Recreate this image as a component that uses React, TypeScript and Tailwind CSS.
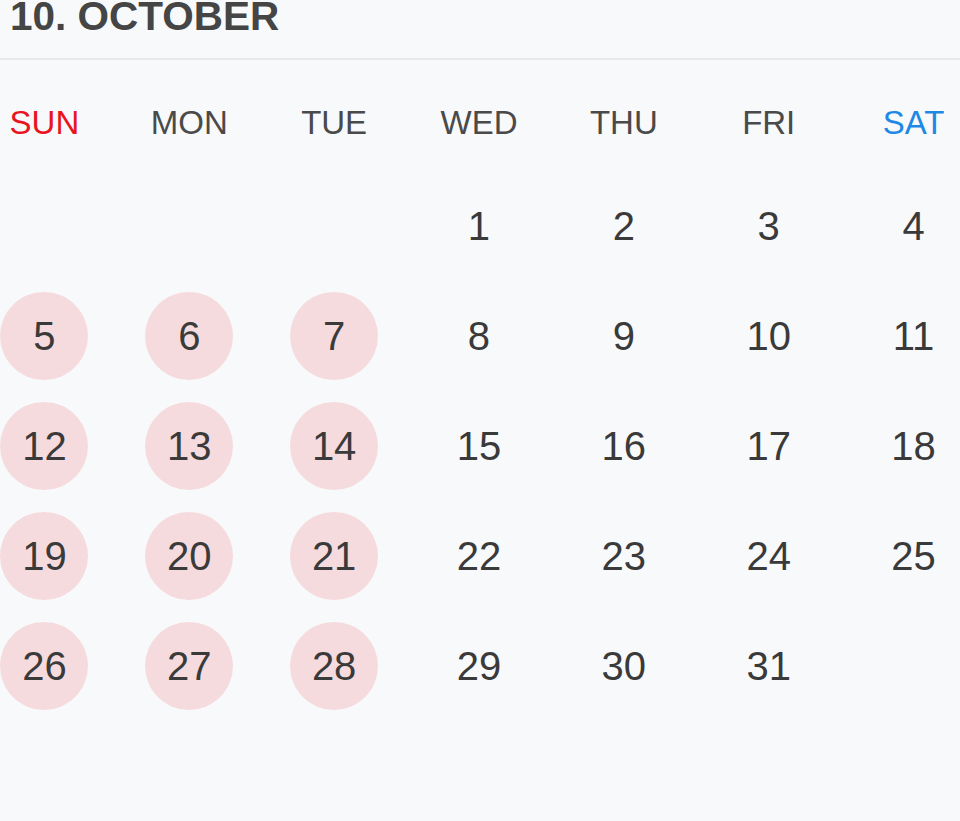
const WEEKDAYS = ['SUN', 'MON', 'TUE', 'WED', 'THU', 'FRI', 'SAT']

// 10월: 1일이 수요일에서 시작
const CELLS: (number | null)[] = [
  null, null, null,
  ...Array.from({ length: 31 }, (_, i) => i + 1),
]

function weekdayColor(i: number) {
  if (i === 0) return 'text-[#e8141e]'
  if (i === 6) return 'text-[#1e88e5]'
  return 'text-[#4a4a4a]'
}

export default function App() {
  return (
    <div
      className="w-[960px] h-[821px] overflow-hidden bg-[#f8f9fb]"
      style={{ fontFamily: '"Liberation Sans", Arial, sans-serif' }}
    >
      <div className="h-[60px] border-b-2 border-[#e6e8eb] px-[10px]">
        <div className="text-[40.5px] leading-[32px] font-bold text-[#454545] whitespace-nowrap">
          10. OCTOBER
        </div>
      </div>

      <div className="-ml-[28px] w-[1014px]">
        <div className="grid grid-cols-7 h-[111px] pt-[46px]">
          {WEEKDAYS.map((d, i) => (
            <div
              key={d}
              className={`text-center text-[33px] leading-[33px] ${weekdayColor(i)}`}
            >
              {d}
            </div>
          ))}
        </div>

        <div className="grid grid-cols-7">
          {CELLS.map((n, i) => {
            const col = i % 7
            const highlighted = n !== null && n >= 5 && col <= 2
            return (
              <div key={i} className="h-[110px] flex items-center justify-center">
                {n !== null && (
                  <div
                    className={`w-[88px] h-[88px] rounded-full flex items-center justify-center text-[40px] leading-[40px] text-[#3a3a3a] ${
                      highlighted ? 'bg-[#f6dbde]' : ''
                    }`}
                  >
                    {n}
                  </div>
                )}
              </div>
            )
          })}
        </div>
      </div>
    </div>
  )
}
